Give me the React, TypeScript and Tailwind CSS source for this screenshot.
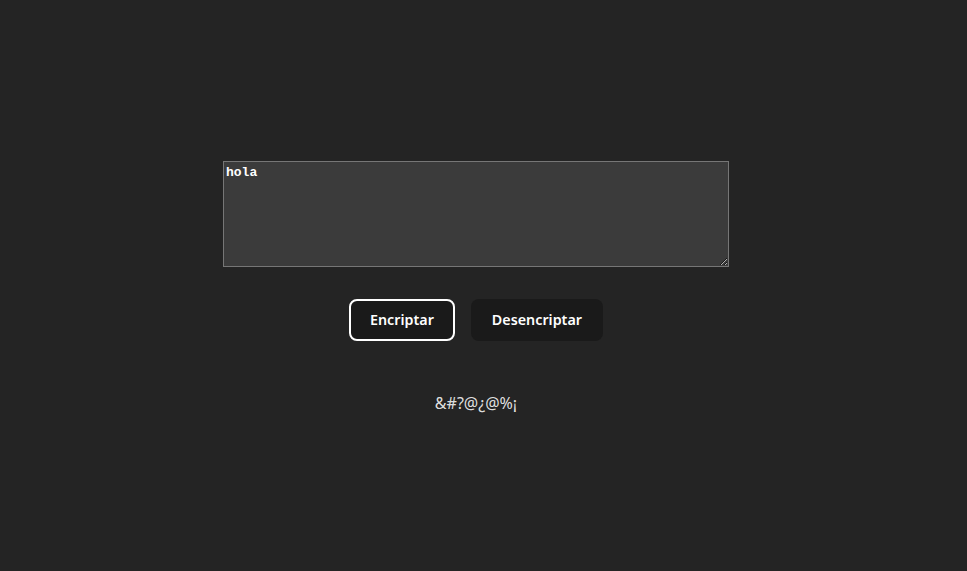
import React, { useState } from "react";

export default function App() {
  const [text, setText] = useState("hola");
  return (
    <div className="min-h-screen w-full bg-[#242424] flex items-center justify-center pr-[15px] pt-[4px] text-[rgba(255,255,255,0.87)]" style={{ fontFamily: '"Noto Sans", "Open Sans", sans-serif' }}>
      <div className="flex flex-col items-center">
        <textarea
          value={text}
          onChange={(e) => setText(e.target.value)}
          className="w-[506px] h-[106px] bg-[#3b3b3b] border border-[#767676] px-[2px] pt-[3px] pb-[1px] text-[13px] leading-[15px] font-bold text-white outline-none"
          style={{ fontFamily: '"Liberation Mono", "DejaVu Sans Mono", monospace' }}
        />
        <div className="flex gap-4 mt-8">
          <button className="h-[42px] px-[19px] rounded-lg border-2 border-white bg-[#1a1a1a] text-white font-semibold text-[14.3px]">
            Encriptar
          </button>
          <button className="h-[42px] px-[19px] rounded-lg border-2 border-transparent bg-[#1a1a1a] text-white font-semibold text-[14.3px]">
            Desencriptar
          </button>
        </div>
        <p className="mt-[50px] text-base leading-6">&amp;#?@¿@%¡</p>
      </div>
    </div>
  );
}
